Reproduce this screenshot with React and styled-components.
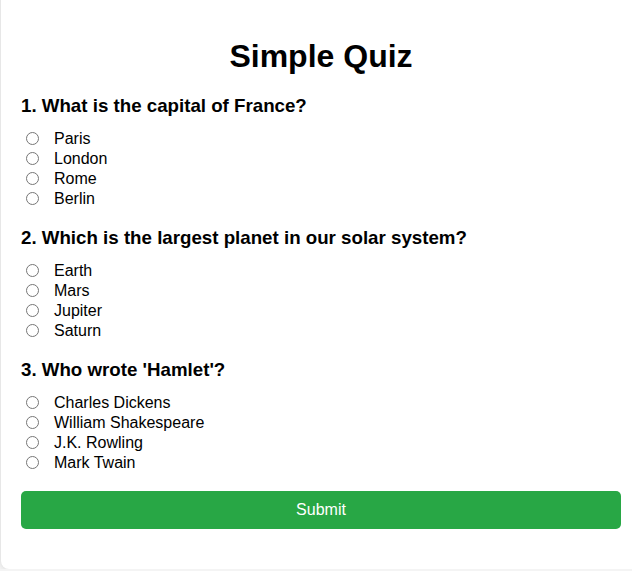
import React, { useState } from "react";
import styled, { createGlobalStyle } from "styled-components";

const GlobalStyle = createGlobalStyle`
    html, body {
        margin: 0;
        padding: 0;
        background: #f4f4f4;
        font-family: "Liberation Sans", Arial, sans-serif;
        overflow: hidden;
    }
`

const Card = styled.div`
    width: 600px;
    margin: -10px 0 0 1px;
    padding: 20px;
    background: #ffffff;
    border-radius: 8px;
    box-shadow: 0 0 6px rgba(0, 0, 0, 0.12);
`

const Title = styled.h1`
    margin: 28px 0 20px;
    font-size: 32px;
    font-weight: bold;
    text-align: center;
    color: #000;
`

const QuestionBlock = styled.div`
    margin-bottom: 18.5px;
`

const QuestionText = styled.h3`
    margin: 0 0 11.5px;
    font-size: 18.72px;
    font-weight: bold;
    color: #000;
`

const Option = styled.label`
    display: flex;
    align-items: center;
    height: 20px;
    font-size: 16px;
    color: #000;
    cursor: pointer;
`

const Radio = styled.input`
    width: 13px;
    height: 13px;
    margin: 0 15px 0 5px;
`

const SubmitButton = styled.button`
    display: block;
    width: 100%;
    height: 38px;
    margin-bottom: 20px;
    border: none;
    border-radius: 5px;
    background: #28a745;
    color: #ffffff;
    font-family: "Liberation Sans", Arial, sans-serif;
    font-size: 16px;
    cursor: pointer;
`

const questions = [
    {
        q: "1. What is the capital of France?",
        options: ["Paris", "London", "Rome", "Berlin"],
    },
    {
        q: "2. Which is the largest planet in our solar system?",
        options: ["Earth", "Mars", "Jupiter", "Saturn"],
    },
    {
        q: "3. Who wrote 'Hamlet'?",
        options: ["Charles Dickens", "William Shakespeare", "J.K. Rowling", "Mark Twain"],
    },
];

export default function App() {
    const [answers, setAnswers] = useState({});
    return (
        <>
            <GlobalStyle />
            <Card>
                <Title>Simple Quiz</Title>
                {questions.map((item, i) => (
                    <QuestionBlock key={i}>
                        <QuestionText>{item.q}</QuestionText>
                        {item.options.map(opt => (
                            <Option key={opt}>
                                <Radio
                                    type="radio"
                                    name={"q" + i}
                                    checked={answers[i] === opt}
                                    onChange={() => setAnswers({ ...answers, [i]: opt })}
                                />
                                {opt}
                            </Option>
                        ))}
                    </QuestionBlock>
                ))}
                <SubmitButton>Submit</SubmitButton>
            </Card>
        </>
    );
}
